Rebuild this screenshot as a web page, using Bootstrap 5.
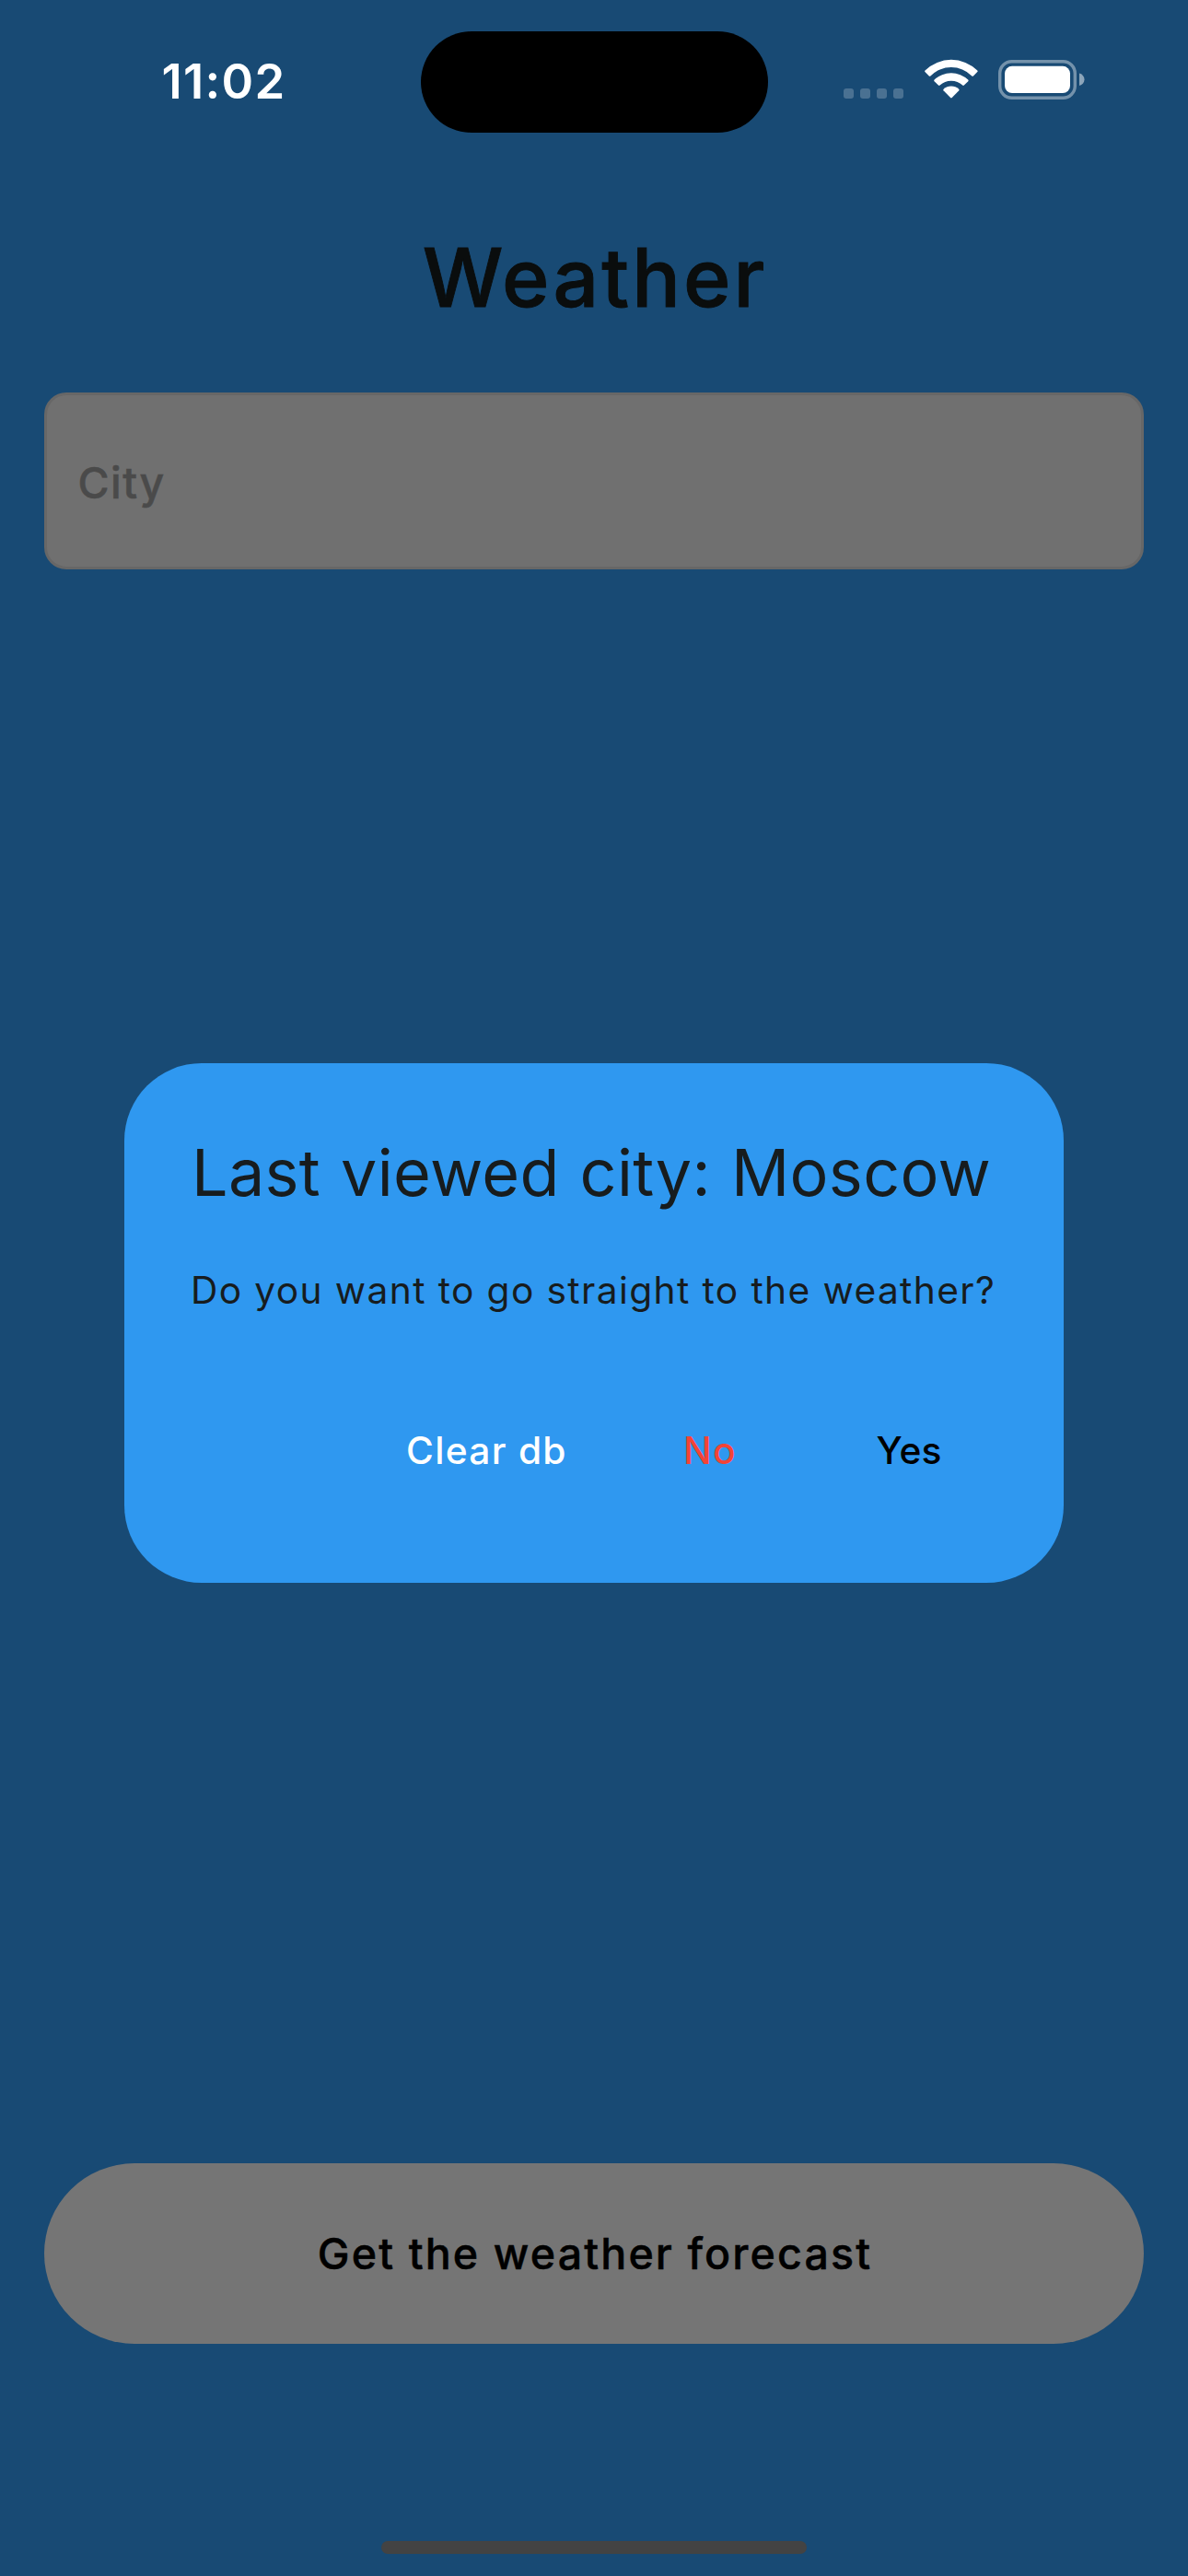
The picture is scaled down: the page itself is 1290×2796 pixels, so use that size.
<!DOCTYPE html>
<html lang="en">
<head>
<meta charset="utf-8">
<meta name="viewport" content="width=device-width, initial-scale=1">
<title>Weather</title>
<link href="https://cdn.jsdelivr.net/npm/bootstrap@5.3.0/dist/css/bootstrap.min.css" rel="stylesheet">
<style>
  body { font-family: Inter, "Liberation Sans", sans-serif; background: #184a74; }
  .screen { width: 1290px; height: 2796px; background: #184a74; }

  /* Status bar */
  .status-bar { height: 177px; }
  .status-side { width: 456.5px; }
  .clock { font-size: 52.5px; font-weight: 600; line-height: 64px; letter-spacing: 1.3px; padding: 0 0 1px 175.5px; }
  .island { width: 377px; height: 110px; }
  .status-icons { padding: 0 112px 5px 0; gap: 22px; }

  /* Page */
  .page-title { font-size: 87.5px; font-weight: 500; -webkit-text-stroke: .9px #0a0d0d; line-height: 106px; letter-spacing: 3.1px; color: #0a0d0d; margin-top: 71px; padding-left: 2px; }
  .page-body { padding: 72px 48px 0; }
  .city-field, .city-field:focus {
    height: 192px; border: 3px solid #676767; border-radius: 24px; background: #707070;
    font-size: 46.5px; font-weight: 500; letter-spacing: 1.5px; padding: 4px 33.5px 0; color: #0a0d0d;
  }
  .city-field::placeholder { color: #4a4a4a; opacity: 1; -webkit-text-stroke: .5px #4a4a4a; }
  .forecast-btn, .forecast-btn:hover {
    height: 196px; background: #757575; color: #000; border: 0;
    font-size: 46.5px; font-weight: 500; -webkit-text-stroke: .5px #000; letter-spacing: 2.15px; line-height: 60px; padding: 0 0 1px 2px;
  }
  .page-foot { padding: 0 48px 24px; }
  .home-bar { width: 462px; height: 14px; background: #434343; margin-top: 214px; }

  /* Dialog */
  .dialog-layer { padding: 177px 135px 102px; }
  .dialog-box { width: 1020px; height: 564px; background: #2f98f0; border-radius: 84px; padding: 72px; color: #171c1e; }
  .dialog-title { font-size: 70px; font-weight: 400; line-height: 94px; letter-spacing: .33px; word-spacing: 2px; padding-left: 1px; }
  .dialog-text { font-size: 40.7px; line-height: 60px; letter-spacing: 1.38px; margin-top: 51px; }
  .dialog-actions { gap: 24px; }
  .dialog-btn { min-width: 192px; height: 144px; padding: 2px 36px 0; border: 0; font-size: 40.7px; font-weight: 500; letter-spacing: 1.3px; }
  .btn-clear, .btn-clear:hover { color: #fff; width: 246px; }
  .btn-no, .btn-no:hover { color: #f44336; }
  .btn-yes, .btn-yes:hover { color: #000; letter-spacing: .2px; }
</style>
</head>
<body>
<div class="screen position-relative overflow-hidden d-flex flex-column">
  <header class="status-bar d-flex align-items-center text-white flex-shrink-0">
    <div class="status-side flex-shrink-0"><div class="clock">11:02</div></div>
    <div class="island bg-black rounded-pill"></div>
    <div class="status-side status-icons flex-shrink-0 d-flex align-items-center justify-content-end">
      <svg width="66" height="44" viewBox="0 0 66 44" fill="#fff" fill-opacity=".22" aria-hidden="true">
        <rect x="0" y="32" width="11" height="11" rx="3"/><rect x="18" y="32" width="11" height="11" rx="3"/><rect x="36" y="32" width="11" height="11" rx="3"/><rect x="54" y="32" width="11" height="11" rx="3"/>
      </svg>
      <svg width="58" height="44" viewBox="0 0 58 44" fill="#fff" aria-hidden="true">
        <path d="M.4 14.1Q-.3 13.3.5 12.5A40.5 40.5 0 0 1 57.300 12.500Q58 13.300 57.300 14.100L52.900 18.400Q52.100 19.200 51.300 18.400A31.700 31.700 0 0 0 6.400 18.400Q5.600 19.200 4.800 18.400Z"/>
        <path d="M10.500 24.200Q9.800 23.400 10.600 22.600A26.400 26.400 0 0 1 47.200 22.600Q48 23.400 47.300 24.200L42.800 28.600Q42 29.400 41.200 28.600A17.800 17.800 0 0 0 16.600 28.600Q15.800 29.400 15 28.600Z"/>
        <path d="M20.500 34.300Q19.800 33.500 20.600 32.700A12.300 12.300 0 0 1 37.200 32.700Q38 33.500 37.300 34.300L29.700 42Q28.900 42.800 28.100 42Z"/>
      </svg>
      <svg width="94" height="44" viewBox="0 0 94 44" aria-hidden="true">
        <rect x="1.700" y="2.700" width="81.600" height="39.600" rx="13" fill="none" stroke="#fff" stroke-opacity=".4" stroke-width="3.400"/>
        <rect x="7" y="7.800" width="71" height="29.200" rx="8" fill="#fff"/>
        <path d="M88 15.500C91.500 16.500 93.500 19.300 93.500 22.300S91.500 28.100 88 29.100Z" fill="#fff" fill-opacity=".5"/>
      </svg>
    </div>
  </header>

  <h1 class="page-title text-center mb-0">Weather</h1>

  <main class="page-body flex-grow-1">
    <input type="text" class="city-field form-control shadow-none" placeholder="City" aria-label="City">
  </main>

  <footer class="page-foot d-flex flex-column align-items-center">
    <button type="button" class="forecast-btn btn rounded-pill w-100">Get the weather forecast</button>
    <div class="home-bar rounded-pill"></div>
  </footer>

  <div class="dialog-layer position-absolute top-0 start-0 w-100 h-100 d-flex align-items-center">
    <div class="dialog-box d-flex flex-column" role="dialog" aria-labelledby="dialogTitle">
      <h2 class="dialog-title mb-0 text-nowrap" id="dialogTitle">Last viewed city: Moscow</h2>
      <p class="dialog-text mb-0 text-nowrap">Do you want to go straight to the weather?</p>
      <div class="dialog-actions d-flex justify-content-end mt-auto">
        <button type="button" class="dialog-btn btn-clear btn text-nowrap">Clear db</button>
        <button type="button" class="dialog-btn btn-no btn">No</button>
        <button type="button" class="dialog-btn btn-yes btn">Yes</button>
      </div>
    </div>
  </div>
</div>
<script src="https://cdn.jsdelivr.net/npm/bootstrap@5.3.0/dist/js/bootstrap.bundle.min.js"></script>
</body>
</html>
